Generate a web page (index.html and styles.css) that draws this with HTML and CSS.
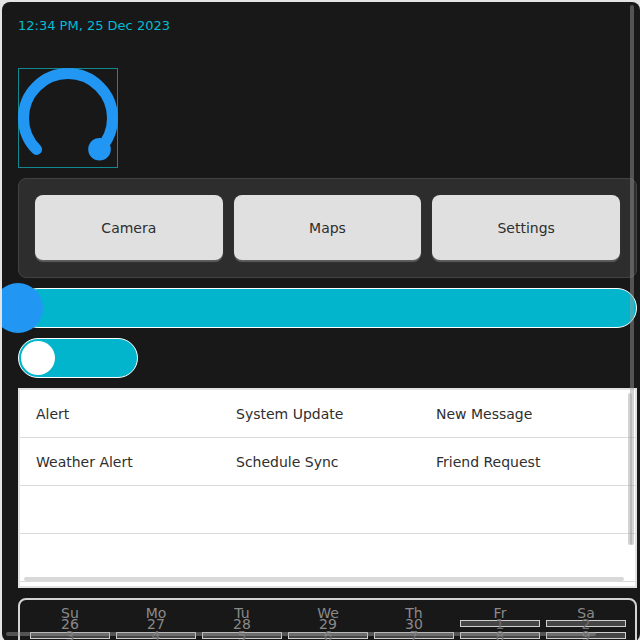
FILE: index.html
```html
<!DOCTYPE html>
<html>
<head>
<meta charset="utf-8">
<link rel="stylesheet" href="styles.css">
</head>
<body>
<div class="screen">
  <div class="content">
    <div class="date-label">12:34 PM, 25 Dec 2023</div>

    <div class="arc-box">
      <svg width="98" height="98" viewBox="1 1 98 98">
        <path d="M 18.53 81.47 A 44.5 44.5 0 1 1 81.47 81.47" fill="none" stroke="#2196f3" stroke-width="11" stroke-linecap="round"/>
        <circle cx="81.5" cy="81.2" r="11.3" fill="#2196f3"/>
      </svg>
    </div>

    <div class="btn-panel">
      <div class="btn">Camera</div>
      <div class="btn">Maps</div>
      <div class="btn">Settings</div>
    </div>

    <div class="slider">
      <div class="slider-bar"></div>
      <div class="slider-knob"></div>
    </div>

    <div class="switch"><div class="switch-knob"></div></div>

    <div class="list">
      <div class="row"><div class="cell">Alert</div><div class="cell">System Update</div><div class="cell">New Message</div></div>
      <div class="row"><div class="cell">Weather Alert</div><div class="cell">Schedule Sync</div><div class="cell">Friend Request</div></div>
      <div class="row"><div class="cell"></div><div class="cell"></div><div class="cell"></div></div>
      <div class="row"><div class="cell"></div><div class="cell"></div><div class="cell"></div></div>
      <div class="list-vscroll"></div>
      <div class="list-hscroll"></div>
    </div>

    <div class="calendar">
      <div class="cal-head">
        <div>Su</div><div>Mo</div><div>Tu</div><div>We</div><div>Th</div><div>Fr</div><div>Sa</div>
      </div>
      <div class="cal-days">
        <div class="day other"><span>26</span></div>
        <div class="day other"><span>27</span></div>
        <div class="day other"><span>28</span></div>
        <div class="day other"><span>29</span></div>
        <div class="day other"><span>30</span></div>
        <div class="day"><span>1</span></div>
        <div class="day"><span>2</span></div>
        <div class="day"><span>3</span></div>
        <div class="day"><span>4</span></div>
        <div class="day"><span>5</span></div>
        <div class="day"><span>6</span></div>
        <div class="day"><span>7</span></div>
        <div class="day"><span>8</span></div>
        <div class="day"><span>9</span></div>
      </div>
    </div>
  </div>
  <div class="screen-vscroll"></div>
  <div class="screen-hscroll"></div>
</div>
</body>
</html>
```
FILE: styles.css
```css
html, body {
  margin: 0;
  padding: 0;
}
body {
  width: 640px;
  height: 640px;
  overflow: hidden;
  background: #e4e4e4;
  font-family: "DejaVu Sans", "Liberation Sans", sans-serif;
  font-size: 14px;
}
.screen {
  margin: 2px 0 0 2px;
  width: 638px;
  height: 640px;
  background: #181818;
  border-radius: 8px;
  position: relative;
  overflow: hidden;
}
.content {
  padding: 16px 0 0 16px;
  display: flex;
  flex-direction: column;
  align-items: flex-start;
  gap: 10px;
}
.date-label {
  color: #00bcd4;
  font-size: 13px;
  line-height: 16px;
  height: 40px;
}
.arc-box {
  width: 100px;
  height: 100px;
  box-sizing: border-box;
  border: 1px solid #138891;
}
.arc-box svg {
  display: block;
  overflow: visible;
}
.btn-panel {
  width: 619px;
  height: 100px;
  box-sizing: border-box;
  background: #2d2d2d;
  border: 1px solid #424242;
  border-radius: 8px;
  padding: 16px;
  display: flex;
  gap: 11px;
}
.btn {
  flex: 1;
  height: 65px;
  background: #e0e0e0;
  border-radius: 8px;
  box-shadow: 0 2px 1px #5e5e5e;
  color: #2e2e2e;
  display: flex;
  align-items: center;
  justify-content: center;
}
.slider {
  width: 619px;
  height: 40px;
  position: relative;
}
.slider-bar {
  height: 40px;
  box-sizing: border-box;
  background: #03b5cc;
  border: 1px solid #ffffff;
  border-radius: 20px;
}
.slider-knob {
  position: absolute;
  left: -25px;
  top: -5px;
  width: 50px;
  height: 50px;
  border-radius: 50%;
  background: #2196f3;
}
.switch {
  width: 120px;
  height: 40px;
  box-sizing: border-box;
  border: 1px solid #ffffff;
  border-radius: 20px;
  background: #03b5cc;
  padding: 2px;
}
.switch-knob {
  width: 34px;
  height: 34px;
  border-radius: 50%;
  background: #ffffff;
}
.list {
  width: 619px;
  height: 200px;
  box-sizing: border-box;
  border: 2px solid #e2e2e2;
  background: #ffffff;
  position: relative;
  overflow: hidden;
}
.row {
  display: grid;
  grid-template-columns: 200px 200px 200px;
  height: 48px;
  box-sizing: border-box;
  border-bottom: 1px solid #dcdcdc;
}
.cell {
  padding-left: 16px;
  color: #2e2e2e;
  display: flex;
  align-items: center;
  white-space: nowrap;
}
.list-vscroll {
  position: absolute;
  right: 3px;
  top: 3px;
  width: 4px;
  height: 152px;
  border-radius: 2px;
  background: rgba(158, 158, 158, 0.45);
}
.list-hscroll {
  position: absolute;
  left: 4px;
  bottom: 5px;
  width: 600px;
  height: 4px;
  border-radius: 2px;
  background: rgba(158, 158, 158, 0.4);
}
.calendar {
  width: 619px;
  height: 200px;
  box-sizing: border-box;
  border: 2px solid #d4d4d4;
  border-radius: 8px;
  background: #181818;
  padding: 7px 7px 0 7px;
}
.cal-head {
  display: grid;
  grid-template-columns: repeat(7, 86px);
  height: 13px;
  line-height: 13px;
  color: #8a8a8a;
  text-align: center;
}
.cal-days {
  display: grid;
  grid-template-columns: repeat(7, 86px);
  grid-auto-rows: 7px;
  row-gap: 5px;
}
.day {
  margin: 0 3px;
  box-sizing: border-box;
  border: 1px solid #cfcfcf;
  background: #454545;
  position: relative;
  text-align: center;
  line-height: 5px;
  color: #6e6e6e;
}
.day span {
  position: relative;
  top: 1px;
}
.day.other {
  border-color: transparent;
  background: transparent;
  color: #8a8a8a;
}
.screen-vscroll {
  position: absolute;
  right: 6px;
  top: 3px;
  width: 4px;
  height: 540px;
  border-radius: 2px;
  background: rgba(158, 158, 158, 0.45);
}
.screen-hscroll {
  position: absolute;
  left: 4px;
  bottom: 6px;
  width: 590px;
  height: 4px;
  border-radius: 2px;
  background: rgba(158, 158, 158, 0.45);
}
```
